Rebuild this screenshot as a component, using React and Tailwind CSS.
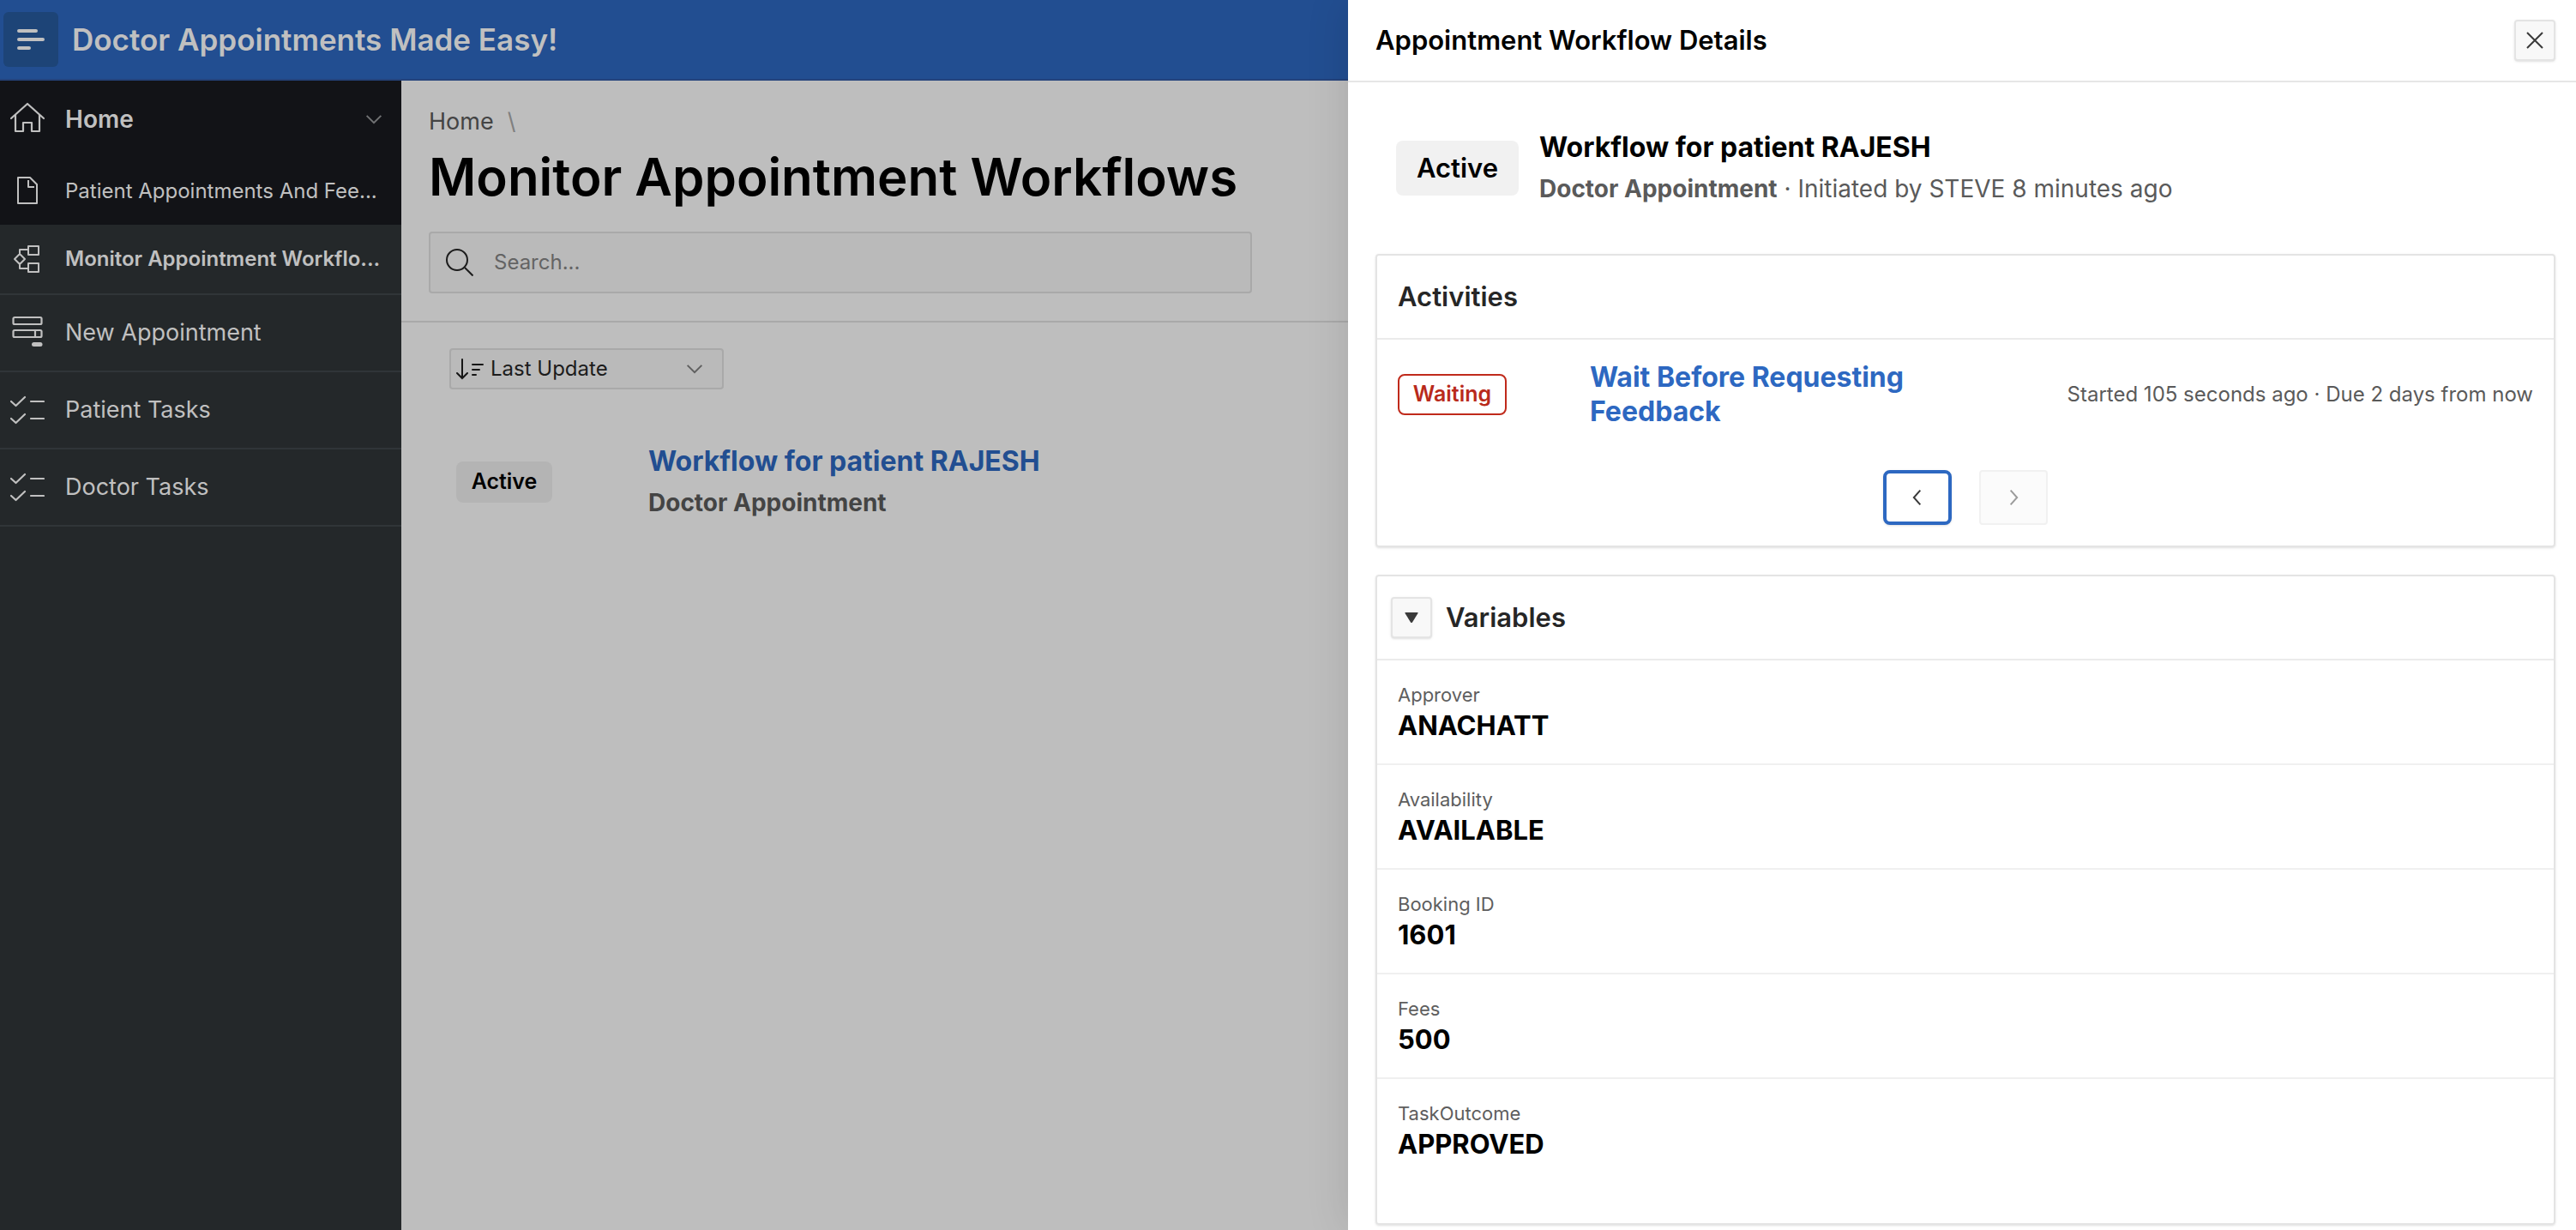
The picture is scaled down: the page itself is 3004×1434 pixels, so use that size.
const sidebarLink = "flex items-center gap-6 border-b-2 border-[#303538] px-3";

function HomeIcon() {
  return (
    <svg viewBox="0 0 40 40" className="size-10 shrink-0" fill="none" stroke="currentColor" strokeWidth="2.2" strokeLinecap="round" strokeLinejoin="round" aria-hidden="true">
      <path d="M1 19 20 2 39 19M6 15v19h9V24h10v10h9V15" />
    </svg>
  );
}

function PageIcon() {
  return (
    <svg viewBox="0 0 40 40" className="size-10 shrink-0" fill="none" stroke="currentColor" strokeWidth="2" strokeLinejoin="round" aria-hidden="true">
      <path d="M9 4h14l8 8v22H9zM21 7v8h7" />
    </svg>
  );
}

function WorkflowIcon() {
  return (
    <svg viewBox="0 0 40 40" className="size-10 shrink-0" fill="none" stroke="currentColor" strokeWidth="2" strokeLinejoin="round" aria-hidden="true">
      <path d="M21 5h12v10H21zM21 25h12v10H21zM11 14l6 6-6 6-6-6zM11 14V9h10M11 26v5h10" />
    </svg>
  );
}

function FormIcon() {
  return (
    <svg viewBox="0 0 40 40" className="size-10 shrink-0" fill="none" stroke="currentColor" strokeWidth="2.2" aria-hidden="true">
      <rect x="3.500" y="2" width="33" height="8" rx="1.5" />
      <rect x="3.500" y="17" width="33" height="8" rx="1.5" />
      <path d="M29 17v8" />
      <rect x="25" y="31" width="12.500" height="5" rx="2.5" fill="currentColor" stroke="none" />
    </svg>
  );
}

function TasksIcon() {
  return (
    <svg viewBox="0 0 40 40" className="size-10 shrink-0" fill="none" stroke="currentColor" strokeWidth="2.2" strokeLinecap="round" strokeLinejoin="round" aria-hidden="true">
      <path d="M1 10l5.500 5L17 5M1 30l5.500 5L17 25M24 10h15M24 30h15" />
    </svg>
  );
}

function Chevron({ className, d = "M2 7l10 10L22 7" }) {
  return (
    <svg viewBox="0 0 24 24" className={className} fill="none" stroke="currentColor" strokeWidth="2.4" aria-hidden="true">
      <path d={d} />
    </svg>
  );
}

const mainLinks = [
  { label: "New Appointment", Icon: FormIcon },
  { label: "Patient Tasks", Icon: TasksIcon },
  { label: "Doctor Tasks", Icon: TasksIcon },
];

const variables = [
  ["Approver", "ANACHATT"],
  ["Availability", "AVAILABLE"],
  ["Booking ID", "1601"],
  ["Fees", "500"],
  ["TaskOutcome", "APPROVED"],
];

function Sidebar() {
  return (
    <nav aria-label="Main" className="w-[468px] shrink-0 bg-[#24282a] text-[#c0c0c0]">
      <div className="bg-[#121317]">
        <a href="#home" className="flex h-[90px] items-center gap-6 px-3 text-[28px] font-semibold">
          <HomeIcon />
          <span className="flex-1">Home</span>
          <Chevron className="mr-2.5 size-5 text-[#707173]" />
        </a>
        <a href="#feedback" className="flex h-[78px] items-center gap-6 px-3 text-2xl">
          <PageIcon />
          <span className="whitespace-nowrap">Patient Appointments And Fee...</span>
        </a>
      </div>
      <a href="#monitor" aria-current="page" className={`${sidebarLink} h-[82px] text-2xl font-semibold`}>
        <WorkflowIcon />
        <span className="whitespace-nowrap">Monitor Appointment Workflo...</span>
      </a>
      {mainLinks.map(({ label, Icon }) => (
        <a key={label} href="#page" className={`${sidebarLink} h-[90px] text-[27px]`}>
          <Icon />
          <span>{label}</span>
        </a>
      ))}
    </nav>
  );
}

function MainContent() {
  return (
    <main className="min-w-0 flex-1">
      <div className="border-b-2 border-[#a9a9a9] px-8 pt-8 pb-8">
        <nav aria-label="Breadcrumb" className="flex h-8 items-center gap-4 text-[27px] text-[#444]">
          <a href="#home">Home</a>
          <span className="text-[#808080]">\</span>
        </nav>
        <h1 className="mt-4 text-[60px] leading-[64px] font-semibold text-black">Monitor Appointment Workflows</h1>
        <div className="mt-8 flex h-[72px] w-[960px] items-center gap-6 rounded-sm border-2 border-[#a9a9a9] bg-[#bababa] pr-4 pl-[18px]">
          <svg viewBox="0 0 32 32" className="size-8 shrink-0 text-[#1c1c1c]" fill="none" stroke="currentColor" strokeWidth="2" aria-hidden="true">
            <circle cx="13" cy="13" r="12" />
            <path d="M22 22l9.500 9.500" />
          </svg>
          <input type="search" aria-label="Search" placeholder="Search..." className="min-w-0 flex-1 bg-transparent text-2xl outline-none placeholder:text-[#646464]" />
        </div>
      </div>
      <div className="px-14 pt-[30px]">
        <div className="relative h-12 w-80">
          <select aria-label="Sort by" className="h-full w-full appearance-none rounded-sm border-2 border-[#a9a9a9] bg-[#bababa] pl-[46px] text-2xl text-[#1c1c1c]">
            <option>Last Update</option>
          </select>
          <svg viewBox="0 0 32 26" className="pointer-events-none absolute top-[11px] left-2 h-[26px] w-8 text-[#161616]" fill="none" stroke="currentColor" strokeWidth="2" strokeLinecap="round" aria-hidden="true">
            <path d="M7 2v22M1 18l6 6 6-6M19 8h12M19 14h8M19 20h4" />
          </svg>
          <Chevron className="pointer-events-none absolute top-3.5 right-6 size-5 text-[#606060]" />
        </div>
        <div className="mt-16 flex items-center px-2">
          <span className="flex h-12 w-28 items-center justify-center rounded-lg bg-[#b4b4b4] text-[25px] font-semibold text-black">Active</span>
          <div className="ml-28">
            <a href="#workflow" className="block text-[32px] leading-10 font-bold text-[#224e91]">Workflow for patient RAJESH</a>
            <p className="mt-2 text-[28px] leading-10 font-bold text-[#444]">Doctor Appointment</p>
          </div>
        </div>
      </div>
    </main>
  );
}

function Drawer() {
  return (
    <aside role="dialog" aria-labelledby="drawer-title" className="absolute inset-y-0 right-0 w-[1432px] max-w-full overflow-hidden bg-white shadow-[0_0_48px_rgba(0,0,0,0.12)]">
      <header className="flex h-24 items-center justify-between border-b-2 border-[#e6e6e6] pr-6 pl-8">
        <h2 id="drawer-title" className="text-[31px] font-semibold text-black">Appointment Workflow Details</h2>
        <button type="button" aria-label="Close" className="flex size-12 items-center justify-center rounded-sm border-2 border-[#e4e4e4] bg-[#f8f8f8] text-[#3a3a3a] shadow-sm">
          <svg viewBox="0 0 20 20" className="size-5" fill="none" stroke="currentColor" strokeWidth="2" aria-hidden="true">
            <path d="M1 1l18 18M19 1L1 19" />
          </svg>
        </button>
      </header>
      <div className="pr-6 pl-8">
        <div className="flex items-center gap-6 px-6 py-[52px]">
          <span className="flex h-16 w-[143px] items-center justify-center rounded-lg bg-[#f1f1f1] text-[31px] font-semibold text-black">Active</span>
          <div>
            <h3 className="text-[32px] leading-12 font-bold text-black">Workflow for patient RAJESH</h3>
            <p className="text-[28px] leading-12 text-[#5a5a5a]">
              <b className="font-bold">Doctor Appointment</b> · Initiated by STEVE 8 minutes ago
            </p>
          </div>
        </div>
        <section className="rounded-sm border-2 border-[#e4e4e4] shadow-sm">
          <h3 className="flex h-[98px] items-center border-b-2 border-[#ebebeb] px-6 text-[31px] font-semibold text-[#262626]">Activities</h3>
          <div className="flex h-32 items-center px-6">
            <span className="flex h-12 w-[127px] items-center justify-center rounded-lg border-2 border-[#c02a1b] text-[25px] font-semibold text-[#b92a1b]">Waiting</span>
            <a href="#activity" className="ml-[97px] w-[400px] text-[32px] leading-10 font-bold text-[#2d68c1]">Wait Before Requesting Feedback</a>
            <p className="ml-auto text-2xl text-[#5a5a5a]">Started 105 seconds ago · Due 2 days from now</p>
          </div>
          <div className="flex justify-center gap-8 py-6">
            <button type="button" aria-label="Previous" className="flex h-16 w-20 items-center justify-center rounded-lg border-4 border-[#2d68c1] bg-white text-[#3a3a3a] shadow-sm">
              <Chevron className="size-5" d="M16 2L7 12l9 10" />
            </button>
            <button type="button" aria-label="Next" disabled className="flex h-16 w-20 items-center justify-center rounded-sm border-2 border-[#f1f1f1] bg-[#fbfbfb] text-[#9b9b9b]">
              <Chevron className="size-5" d="M8 2l9 10-9 10" />
            </button>
          </div>
        </section>
        <section className="mt-8 rounded-sm border-2 border-[#e4e4e4] shadow-sm">
          <div className="flex h-[98px] items-center gap-4 border-b-2 border-[#ebebeb] px-4">
            <button type="button" aria-label="Collapse variables" aria-expanded="true" className="flex size-12 items-center justify-center rounded-sm border-2 border-[#e4e4e4] bg-[#f8f8f8] text-[#3a3a3a] shadow-sm">
              <svg viewBox="0 0 16 12" className="h-3 w-4" fill="currentColor" aria-hidden="true">
                <path d="M1 0h14q1 0 .5 1L9 11.500q-1 1-2 0L.5 1Q0 0 1 0z" />
              </svg>
            </button>
            <h3 className="text-[31px] font-semibold text-[#262626]">Variables</h3>
          </div>
          <dl className="pb-12">
            {variables.map(([name, value]) => (
              <div key={name} className="border-b-2 border-[#f0f0f0] px-6 pt-6 pb-6 last:border-b-0">
                <dt className="text-[22px] leading-8 text-[#5e5e5e]">{name}</dt>
                <dd className="text-[31px] leading-10 font-bold text-black">{value}</dd>
              </div>
            ))}
          </dl>
        </section>
      </div>
    </aside>
  );
}

export default function App() {
  return (
    <div className="relative flex min-h-screen flex-col overflow-hidden bg-[#bebebe] font-['Inter',sans-serif]">
      <header className="flex h-[94px] items-center gap-4 border-b-2 border-[#24437c] bg-[#224e91] px-1">
        <button type="button" aria-label="Toggle navigation" className="flex size-16 items-center justify-center rounded-md bg-[#1d4477] text-[#c0c0c0]">
          <svg viewBox="0 0 32 24" className="h-6 w-8" stroke="currentColor" strokeWidth="4" strokeLinecap="round" aria-hidden="true">
            <path d="M2 2h20M2 12h28M2 22h12" />
          </svg>
        </button>
        <span className="text-[35px] font-semibold text-[#c0c0c0]">Doctor Appointments Made Easy!</span>
      </header>
      <div className="flex flex-1">
        <Sidebar />
        <MainContent />
      </div>
      <Drawer />
    </div>
  );
}
